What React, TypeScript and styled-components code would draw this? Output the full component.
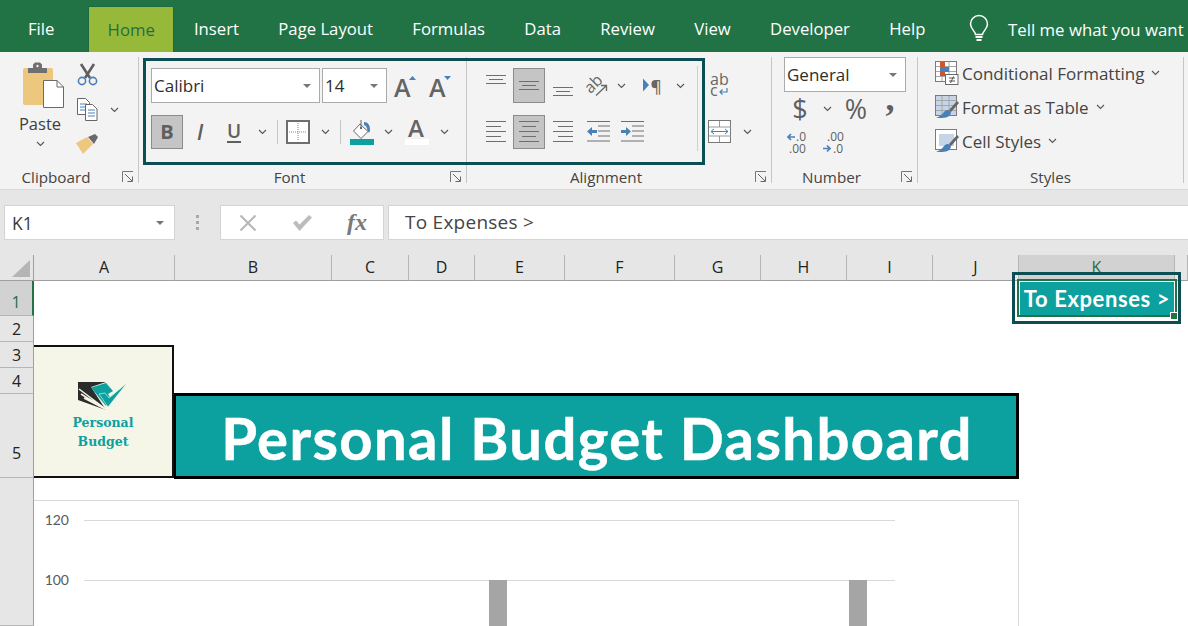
import * as React from "react";
import styled, { createGlobalStyle } from "styled-components";

const GlobalStyle = createGlobalStyle`
  html, body {
    margin: 0;
    padding: 0;
    width: 1188px;
    height: 626px;
    overflow: hidden;
    background: #fff;
    font-family: "Open Sans", "Noto Sans", sans-serif;
  }
  * { box-sizing: border-box; }
  svg { overflow: visible; }
`;

const Page = styled.div`
  width: 1188px;
  height: 626px;
  display: flex;
  flex-direction: column;
  overflow: hidden;
`;

/* tabs */
const TabBar = styled.div`
  height: 52px;
  background: #217346;
  display: flex;
  align-items: flex-end;
  padding-left: 8.3px;
  white-space: nowrap;
  flex: none;
  overflow: hidden;
`;

const Tab = styled.div<{ $active?: boolean }>`
  height: ${(p) => (p.$active ? "46px" : "52px")};
  padding: ${(p) => (p.$active ? "0 18.5px" : "6px 19.7px 0")};
  line-height: 46px;
  font-size: 16.7px;
  color: ${(p) => (p.$active ? "#1f6f45" : "#fff")};
  background: ${(p) => (p.$active ? "#97b93a" : "transparent")};
  border-top: ${(p) => (p.$active ? "1px solid #1d6b3c" : "none")};
  border-left: ${(p) => (p.$active ? "1px solid #1d6b3c" : "none")};
  border-right: ${(p) => (p.$active ? "1px solid #1d6b3c" : "none")};
  &:first-child {
    margin-right: 14px;
  }
`;

const TellMe = styled.div`
  display: flex;
  align-items: center;
  height: 52px;
  padding: 6px 0 0 24px;
  gap: 19px;
  color: #fff;
  font-size: 16.8px;
`;

/* ribbon */
const Ribbon = styled.div`
  position: relative;
  height: 138px;
  flex: none;
  display: flex;
  align-items: flex-start;
  padding-top: 5px;
  background: #f3f3f3;
  border-bottom: 1px solid #d9d9d9;
`;

const Group = styled.div<{ $w: number }>`
  width: ${(p) => p.$w}px;
  height: 130px;
  display: flex;
  flex-direction: column;
  flex: none;
`;

const GroupBody = styled.div<{ $pt?: number; $pl?: number; $gap?: number; $row?: boolean }>`
  flex: 1;
  display: flex;
  flex-direction: ${(p) => (p.$row ? "row" : "column")};
  padding-top: ${(p) => p.$pt ?? 0}px;
  padding-left: ${(p) => p.$pl ?? 0}px;
  gap: ${(p) => p.$gap ?? 0}px;
`;

const GroupFoot = styled.div`
  height: 20px;
  display: flex;
  align-items: center;
`;

const GroupName = styled.div`
  flex: 1;
  text-align: center;
  font-size: 15.2px;
  line-height: 20px;
  color: #444;
`;

const Launcher = styled.div`
  width: 26px;
  flex: none;
  padding-left: 10px;
  display: flex;
  align-items: center;
`;

const GroupSep = styled.div`
  width: 1px;
  height: 126px;
  background: #c6c6c6;
  flex: none;
`;

const Stack = styled.div<{ $w: number; $gap?: number; $pl?: number }>`
  width: ${(p) => p.$w}px;
  flex: none;
  display: flex;
  flex-direction: column;
  gap: ${(p) => p.$gap ?? 0}px;
  padding-left: ${(p) => p.$pl ?? 0}px;
`;

const InnerRule = styled.div`
  width: 1px;
  height: 85px;
  margin-top: -2px;
  background: #cfcfcf;
  flex: none;
`;

const Row = styled.div<{ $h: number }>`
  height: ${(p) => p.$h}px;
  display: flex;
  align-items: center;
  flex: none;
`;

const Slot = styled.div<{ $w: number; $on?: boolean; $h?: number; $nudge?: number }>`
  width: ${(p) => p.$w}px;
  height: ${(p) => p.$h ?? 34}px;
  flex: none;
  display: flex;
  align-items: center;
  justify-content: center;
  color: #5f5f5f;
  background: ${(p) => (p.$on ? "#c5c5c5" : "transparent")};
  border: ${(p) => (p.$on ? "1px solid #8c8c8c" : "none")};
  padding-top: ${(p) => Math.max(p.$nudge ?? 0, 0)}px;
  padding-bottom: ${(p) => Math.max(-(p.$nudge ?? 0), 0)}px;
`;

const VSep = styled.div<{ $l: number; $r: number }>`
  width: 1px;
  height: 24px;
  margin: 0 ${(p) => p.$r}px 0 ${(p) => p.$l}px;
  background: #c6c6c6;
  flex: none;
`;

const Combo = styled.div<{ $w: number }>`
  width: ${(p) => p.$w}px;
  height: 35px;
  flex: none;
  background: #fff;
  border: 1px solid #ababab;
  display: flex;
  align-items: center;
  justify-content: space-between;
  padding: 0 8px 0 2px;
  font-size: 17px;
  color: #2d2d2d;
`;

const ComboCaret = styled.span`
  width: 0;
  height: 0;
  border-left: 4px solid transparent;
  border-right: 4px solid transparent;
  border-top: 4px solid #777;
`;

const Glyph = styled.span<{ $size: number; $weight?: number; $italic?: boolean; $serif?: boolean; $under?: boolean; $lift?: number }>`
  font-size: ${(p) => p.$size}px;
  font-weight: ${(p) => p.$weight ?? 400};
  font-style: ${(p) => (p.$italic ? "italic" : "normal")};
  font-family: ${(p) => (p.$serif ? '"Liberation Serif", serif' : '"Open Sans", sans-serif')};
  line-height: 1;
  color: #5f5f5f;
  border-bottom: ${(p) => (p.$under ? "2px solid #5f5f5f" : "none")};
  margin-bottom: ${(p) => p.$lift ?? 0}px;
`;

const PasteColumn = styled.div`
  width: 76px;
  padding-left: 4px;
  display: flex;
  flex-direction: column;
  align-items: center;
  flex: none;
  padding-top: 5px;
`;

const PasteArt = styled.div`
  margin-left: 7px;
  height: 47px;
`;

const PasteLabel = styled.div`
  font-size: 16.5px;
  line-height: 22px;
  color: #3e3e3e;
  margin-top: 4px;
  margin-bottom: 6px;
`;

const StyleRow = styled.div`
  height: 34px;
  display: flex;
  align-items: center;
  gap: 3px;
  font-size: 17px;
  color: #444;
  white-space: nowrap;
`;

const StyleList = styled.div`
  margin-top: -1px;
`;

const StyleChevron = styled.span`
  margin-left: 4px;
  display: flex;
`;

/* dark frames drawn over the shot */
const RibbonFrame = styled.div`
  position: absolute;
  left: 143px;
  top: 6px;
  width: 562px;
  height: 107px;
  border: 3px solid #0b4f55;
  pointer-events: none;
`;

/* formula bar */
const FormulaArea = styled.div`
  height: 65px;
  flex: none;
  background: #e6e6e6;
  display: flex;
  align-items: flex-start;
  padding: 15px 0 0 4px;
`;

const NameBox = styled.div`
  width: 171px;
  height: 35px;
  flex: none;
  background: #fff;
  border: 1px solid #d4d4d4;
  display: flex;
  align-items: center;
  justify-content: space-between;
  padding: 0 10px 0 7px;
  font-size: 17.5px;
  color: #3a3a3a;
`;

const Grip = styled.div`
  width: 45px;
  height: 35px;
  flex: none;
  display: flex;
  flex-direction: column;
  align-items: center;
  justify-content: center;
  gap: 3px;
  span {
    width: 3px;
    height: 3px;
    background: #a8a8a8;
  }
`;

const FxBox = styled.div`
  width: 164px;
  height: 35px;
  flex: none;
  background: #fff;
  border: 1px solid #d4d4d4;
  display: flex;
  align-items: center;
  justify-content: space-between;
  padding: 0 16px 0 18px;
  margin-right: 4px;
`;

const FxGlyph = styled.span`
  font-family: "Liberation Serif", serif;
  font-style: italic;
  font-weight: 700;
  font-size: 24px;
  color: #7a7a7a;
`;

const FormulaInput = styled.div`
  flex: 1;
  height: 35px;
  background: #fff;
  border: 1px solid #d4d4d4;
  border-right: none;
  padding-left: 16px;
  line-height: 33px;
  font-size: 19px;
  letter-spacing: 0.25px;
  color: #444;
  white-space: nowrap;
`;

/* sheet */
const Sheet = styled.div`
  flex: 1;
  display: grid;
  grid-template-columns: 34px 141px 157px 77px 66px 90px 110px 86px 86px 86px 86px 156px 13px;
  grid-template-rows: 26px 35px 26px 26px 26px 84px 148px;
  background: #fff;
  min-height: 0;
`;

const Corner = styled.div`
  background: #e6e6e6;
  border-right: 1px solid #9f9f9f;
  border-bottom: 1px solid #9f9f9f;
  display: flex;
  align-items: flex-end;
  justify-content: flex-end;
  padding: 0 3px 3px 0;
`;

const ColHead = styled.div<{ $on?: boolean }>`
  background: ${(p) => (p.$on ? "#d2d2d2" : "#e6e6e6")};
  border-right: 1px solid #b5b5b5;
  border-bottom: 1px solid #9f9f9f;
  text-align: center;
  font-size: 16px;
  line-height: 25px;
  color: ${(p) => (p.$on ? "#1f6f45" : "#222")};
`;

const RowHead = styled.div<{ $on?: boolean; $pb?: number; $row: number }>`
  grid-column: 1;
  grid-row: ${(p) => p.$row};
  background: ${(p) => (p.$on ? "#d2d2d2" : "#e6e6e6")};
  border-right: ${(p) => (p.$on ? "2px solid #217346" : "1px solid #9f9f9f")};
  border-bottom: 1px solid #b5b5b5;
  display: flex;
  align-items: ${(p) => (p.$pb !== undefined ? "flex-end" : "center")};
  justify-content: center;
  padding-bottom: ${(p) => p.$pb ?? 0}px;
  font-size: 16px;
  line-height: 20px;
  color: ${(p) => (p.$on ? "#1f6f45" : "#222")};
`;

const LogoCell = styled.div`
  grid-column: 2;
  grid-row: 4 / 7;
  margin: 3px 1px 0 0;
  background: #f5f6e8;
  border-top: 2px solid #111;
  border-right: 2px solid #111;
  border-bottom: 2px solid #111;
  display: flex;
  flex-direction: column;
  align-items: center;
  padding-top: 34px;
`;

const LogoWord = styled.div`
  font-family: "DejaVu Serif", serif;
  font-weight: 700;
  font-size: 12.5px;
  line-height: 19px;
  color: #0ca09f;
  position: relative;
  top: 2px;
`;

const TitleCell = styled.div`
  grid-column: 3 / 12;
  grid-row: 6;
  margin: -1px 0 -1px -1px;
  background: #0ca09f;
  border: 3px solid #000;
  border-left: 2px solid #000;
  display: flex;
  align-items: center;
  justify-content: center;
  color: #fff;
  font-family: "Lato", sans-serif;
  font-weight: 700;
  font-size: 58px;
  letter-spacing: 1.4px;
  -webkit-text-stroke: 0.5px #fff;
  padding: 2px 0 0 2px;
  white-space: nowrap;
`;

const SelectedCell = styled.div`
  grid-column: 12;
  grid-row: 2;
  position: relative;
  background: #0ca09f;
  color: #fff;
  font-family: "Lato", sans-serif;
  font-weight: 700;
  font-size: 22px;
  letter-spacing: 0.6px;
  display: flex;
  align-items: center;
  justify-content: center;
  white-space: nowrap;
  box-shadow: inset 0 0 0 1px #fff;
`;

const SelectionBorder = styled.div`
  position: absolute;
  inset: -2px -2px -1px -2px;
  border: 2px solid #217346;
  pointer-events: none;
`;

const SelectionHandle = styled.div`
  position: absolute;
  right: -3px;
  bottom: -4px;
  width: 8px;
  height: 8px;
  background: #217346;
  border: 1px solid #fff;
`;

const SelectionFrame = styled.div`
  position: absolute;
  inset: -9px -6px -8px -7px;
  border: 3px solid #0b4f55;
  pointer-events: none;
`;

const ChartPanel = styled.div`
  grid-column: 2 / 12;
  grid-row: 7;
  margin-top: 22px;
  border-top: 1px solid #d9d9d9;
  border-right: 1px solid #d9d9d9;
  overflow: hidden;
`;

/* icons */
const blue = "#4a80b8";

const Chevron = () => (
  <svg width="9" height="6" viewBox="0 0 9 6">
    <path d="M1 1l3.5 3.5L8 1" fill="none" stroke="#555" strokeWidth="1.1" />
  </svg>
);

const LauncherIcon = () => (
  <svg width="12" height="12" viewBox="0 0 12 12">
    <path d="M.5 11V.5H11" fill="none" stroke="#777" />
    <path d="M3 3l7 7M10.500 5.500v5h-5" fill="none" stroke="#666" />
  </svg>
);

const PasteIcon = () => (
  <svg width="42" height="47" viewBox="0 0 42 47">
    <rect x="0" y="6" width="30" height="37" rx="2" fill="#eec77f" />
    <path d="M5 6h5V2.500L12 .5h5l2 2V6h5v5H5z" fill="#6f6f6f" />
    <circle cx="14.500" cy="4" r="1.200" fill="#eee" />
    <path d="M20.500 18.500H34l6.500 6.500v20.500h-20z" fill="#fff" stroke="#6a6a6a" />
    <path d="M34 18.500V25h6.500" fill="none" stroke="#6a6a6a" />
  </svg>
);

const ScissorsIcon = () => (
  <svg width="21" height="23" viewBox="0 0 21 23">
    <path d="M4 1l9 14M17 1L8 15" stroke="#5f5f5f" strokeWidth="2.600" fill="none" />
    <circle cx="5" cy="18" r="3.600" fill="none" stroke={blue} strokeWidth="1.600" />
    <circle cx="16" cy="18" r="3.600" fill="none" stroke={blue} strokeWidth="1.600" />
  </svg>
);

const CopyIcon = () => (
  <svg width="21" height="23" viewBox="0 0 21 23">
    <path d="M.5.5h8l4 4v12H.5z" fill="#fff" stroke="#666" />
    <path d="M3 6h7M3 9h7M3 12h7" stroke={blue} />
    <path d="M8.500 6.500h7l4.500 4.500v11.500H8.500z" fill="#fff" stroke="#666" />
    <path d="M11 12h7M11 15h7M11 18h7" stroke={blue} />
  </svg>
);

const BrushIcon = () => (
  <svg width="24" height="21" viewBox="0 0 24 21">
    <path d="M1 9l11-6 6 7-10 10z" fill="#eec77f" />
    <path d="M13 3l7-3 3 3-4 7z" fill="#6a6a6a" />
  </svg>
);

const GrowShrink = ({ down }: { down?: boolean }) => (
  <svg width="24" height="26" viewBox="0 0 24 26">
    <text x="0" y="24" fontFamily="Open Sans, sans-serif" fontWeight="600" fontSize="25" fill="#646464">A</text>
    <path d={down ? "M15 3h7l-3.500 4z" : "M15 7h7l-3.500-4z"} fill={blue} />
  </svg>
);

const BorderIcon = () => (
  <svg width="24" height="24" viewBox="0 0 24 24">
    <rect x="1" y="1" width="22" height="22" fill="#fff" stroke="#6e6e6e" strokeWidth="2" />
    <path d="M12 3v18M3 12h18" stroke="#888" strokeDasharray="1 1" />
  </svg>
);

const FillIcon = () => (
  <svg width="25" height="26" viewBox="0 0 25 26">
    <path d="M11 5l8 7.500-7 7-7.500-7.500z" fill="#fff" stroke="#666" />
    <path d="M12 1v8" stroke="#666" />
    <circle cx="12" cy="9" r="1.200" fill="#666" />
    <path d="M15 3c4 0 6 3 6 8 0 2-1 3-2 2-1-3-1-6-4-7z" fill={blue} />
    <rect x="1" y="20" width="24" height="6" fill="#0ca09f" />
  </svg>
);

const FontColorIcon = () => (
  <svg width="24" height="26" viewBox="0 0 24 26">
    <text x="3" y="18" fontFamily="Open Sans, sans-serif" fontWeight="600" fontSize="24" fill="#646464">A</text>
    <rect x="0" y="20" width="24" height="6" fill="#fff" />
  </svg>
);

type LineSpec = [number, number, number];

const Lines = ({ w, h, lines }: { w: number; h: number; lines: LineSpec[] }) => (
  <svg width={w} height={h} viewBox={`0 0 ${w} ${h}`}>
    {lines.map(([a, b, y], i) => (
      <path key={i} d={`M${a} ${y + 0.5}H${b}`} stroke="#6e6e6e" />
    ))}
  </svg>
);

const OrientIcon = () => (
  <svg width="22" height="22" viewBox="0 0 22 22">
    <text x="-1" y="14" transform="rotate(-45 8 10)" fontFamily="Open Sans, sans-serif" fontSize="16" fill="#666">ab</text>
    <path d="M10 20.500L20 11M15 10.500H20.500V16" fill="none" stroke="#666" strokeWidth="1.300" />
  </svg>
);

const ParagraphIcon = () => (
  <svg width="20" height="17" viewBox="0 0 20 17">
    <path d="M0 1.500l6 6.500-6 6.500z" fill={blue} />
    <text x="7.500" y="14.500" fontFamily="Open Sans, sans-serif" fontWeight="600" fontSize="17" fill="#666">¶</text>
  </svg>
);

const IndentIcon = ({ out }: { out?: boolean }) => (
  <svg width="23" height="21" viewBox="0 0 23 21">
    {[0.5, 5, 10, 15, 20].map((y, i) => (
      <path key={y} d={`M${i === 0 || i === 4 ? 0 : 11} ${y}H23`} stroke="#6e6e6e" />
    ))}
    {out ? (
      <path d="M0 10.500L5 6v3h5v3H5v3z" fill={blue} />
    ) : (
      <path d="M10 10.500L5 6v3H0v3h5v3z" fill={blue} />
    )}
  </svg>
);

const WrapIcon = () => (
  <svg width="20" height="24" viewBox="0 0 20 24">
    <text x="0" y="11" fontFamily="Open Sans, sans-serif" fontSize="16" fill="#666">ab</text>
    <text x="0" y="22" fontFamily="Open Sans, sans-serif" fontSize="16" fill="#666">c</text>
    <path d="M17 14v4h-7M12.500 15.500L10 18l2.500 2.500" fill="none" stroke={blue} strokeWidth="1.200" />
  </svg>
);

const MergeIcon = () => (
  <svg width="24" height="24" viewBox="0 0 24 24">
    <rect x=".5" y=".5" width="22" height="22" fill="#fff" stroke="#777" />
    <path d="M1 7h22M1 16h22M11.500 1v6M11.500 16v6" stroke="#999" />
    <path d="M3 11.500h17M6 9l-3 2.500L6 14M17 9l3 2.500-3 2.500" fill="none" stroke={blue} />
  </svg>
);

const DecimalIcon = ({ more }: { more?: boolean }) => (
  <svg width="24" height="24" viewBox="0 0 24 24">
    {more ? (
      <>
        <text x="5" y="10" fontFamily="Open Sans, sans-serif" fontSize="12" fill="#5f5f5f">.00</text>
        <text x="11" y="22" fontFamily="Open Sans, sans-serif" fontSize="12" fill="#5f5f5f">.0</text>
        <path d="M1 17.500h6M5 14.500l3 3-3 3" fill="none" stroke={blue} strokeWidth="1.700" />
      </>
    ) : (
      <>
        <text x="9" y="10" fontFamily="Open Sans, sans-serif" fontSize="12" fill="#5f5f5f">.0</text>
        <text x="2" y="22" fontFamily="Open Sans, sans-serif" fontSize="12" fill="#5f5f5f">.00</text>
        <path d="M8 6h-6M4 3L1 6l3 3" fill="none" stroke={blue} strokeWidth="1.700" />
      </>
    )}
  </svg>
);

const TableBase = () => (
  <>
    <rect x=".5" y=".5" width="21" height="20" fill="none" stroke="#7b7b7b" />
    <path d="M1 5.500h20M1 10.500h20M1 15.500h20M7 1v19M14 1v19" stroke="#a6a6a6" />
  </>
);

const CondFormatIcon = () => (
  <svg width="24" height="24" viewBox="0 0 24 24">
    <rect x="1" y="1" width="20" height="19" fill="#fff" />
    <TableBase />
    <rect x="5" y="1" width="5" height="5" fill="#d2532a" />
    <rect x="5" y="6" width="9" height="5" fill={blue} />
    <rect x="5" y="11" width="5" height="4" fill="#d2532a" />
    <rect x="10.500" y="13.500" width="12.500" height="10" fill="#fff" stroke="#6a6a6a" />
    <path d="M14 17h6M14 20h6M18.500 15.500l-3 6.500" stroke="#555" fill="none" />
  </svg>
);

const SmallBrush = () => (
  <>
    <path d="M14 15L22 6l2 2-8 9z" fill="#666" />
    <path d="M9 17c3-3 6-2 7 0 0 3-3 6-9 6h-6c3-1 6-3 8-6z" fill={blue} />
  </>
);

const FormatTableIcon = () => (
  <svg width="24" height="24" viewBox="0 0 24 24">
    <rect x="1" y="1" width="20" height="19" fill="#c5d4e6" />
    <TableBase />
    <SmallBrush />
  </svg>
);

const CellStylesIcon = () => (
  <svg width="24" height="24" viewBox="0 0 24 24">
    <rect x=".5" y=".5" width="21" height="20" fill="#fff" stroke="#7b7b7b" />
    <rect x="4" y="5" width="15" height="12" fill="#c5d4e6" />
    <SmallBrush />
  </svg>
);

const BulbIcon = () => (
  <svg width="20" height="26" viewBox="0 0 20 26">
    <path d="M6.500 18.500c0-3-5-5.500-5-10.500a8.500 8.500 0 0 1 17 0c0 5-5 7.500-5 10.500z" fill="none" stroke="#fff" strokeWidth="1.500" />
    <path d="M6.500 21h7M7.500 24h5" stroke="#fff" strokeWidth="1.800" />
  </svg>
);

const CrossIcon = () => (
  <svg width="18" height="18" viewBox="0 0 18 18">
    <path d="M1.500 1.500l15 15M16.500 1.500l-15 15" stroke="#b9b9b9" strokeWidth="2.200" />
  </svg>
);

const CheckIcon = () => (
  <svg width="20" height="16" viewBox="0 0 20 16">
    <path d="M1 8l3-2.500 3.500 4L17 0l3 2.500L7.500 16z" fill="#bcbcbc" />
  </svg>
);

const CornerIcon = () => (
  <svg width="18" height="17" viewBox="0 0 18 17">
    <path d="M18 0v17H0z" fill="#b5b5b5" />
  </svg>
);

const LogoMark = () => (
  <svg width="50" height="30" viewBox="0 0 50 30">
    <path d="M0 1h28L13 6l15 23L0 19z" fill="#2b2b2b" />
    <path d="M29 29L1 8M29 29L3 13M29 29L6 17" stroke="#f5f6e8" strokeWidth="1.500" />
    <path d="M13 6.500L28 2l7 8-5 3 3 5-5 7z" fill="#0ca09f" />
    <path d="M21 13l9 13L49 2 31 17l-4-5z" fill="#0ca09f" stroke="#f5f6e8" strokeWidth=".6" />
  </svg>
);

const ChartSvg = () => (
  <svg width="984" height="126" viewBox="0 0 984 126">
    <path d="M50 19.500h811M50 79.500h811" stroke="#d9d9d9" />
    <text x="35" y="24" textAnchor="end" fontFamily="Lato, sans-serif" fontSize="14" fill="#595959">120</text>
    <text x="35" y="84" textAnchor="end" fontFamily="Lato, sans-serif" fontSize="14" fill="#595959">100</text>
    <rect x="455" y="79" width="18" height="47" fill="#a5a5a5" />
    <rect x="815" y="79" width="18" height="47" fill="#a5a5a5" />
  </svg>
);

const tabs = ["Insert", "Page Layout", "Formulas", "Data", "Review", "View", "Developer", "Help"];
const cols = ["A", "B", "C", "D", "E", "F", "G", "H", "I", "J"];

const topLines: LineSpec[] = [[0, 20, 0], [3, 17, 4], [0, 20, 8]];
const leftLines: LineSpec[] = [[0, 20, 0], [0, 15, 5], [0, 20, 10], [0, 15, 15], [0, 20, 20]];
const centerLines: LineSpec[] = [[0, 20, 0], [3, 17, 5], [0, 20, 10], [3, 17, 15], [0, 20, 20]];
const rightLines: LineSpec[] = [[0, 20, 0], [5, 20, 5], [0, 20, 10], [5, 20, 15], [0, 20, 20]];

export default function App() {
  return (
    <Page>
      <GlobalStyle />
      <TabBar>
        <Tab>File</Tab>
        <Tab $active>Home</Tab>
        {tabs.map((t) => (
          <Tab key={t}>{t}</Tab>
        ))}
        <TellMe>
          <BulbIcon />
          <span>Tell me what you want</span>
        </TellMe>
      </TabBar>

      <Ribbon>
        <Group $w={138}>
          <GroupBody $row>
            <PasteColumn>
              <PasteArt><PasteIcon /></PasteArt>
              <PasteLabel>Paste</PasteLabel>
              <Chevron />
            </PasteColumn>
            <div>
              <Row $h={35}>
                <Slot $w={22}><ScissorsIcon /></Slot>
              </Row>
              <Row $h={35}>
                <Slot $w={22}><CopyIcon /></Slot>
                <Slot $w={32}><Chevron /></Slot>
              </Row>
              <Row $h={35}>
                <Slot $w={22}><BrushIcon /></Slot>
              </Row>
            </div>
          </GroupBody>
          <GroupFoot>
            <GroupName>Clipboard</GroupName>
            <Launcher><LauncherIcon /></Launcher>
          </GroupFoot>
        </Group>
        <GroupSep />

        <Group $w={327}>
          <GroupBody $pt={11} $pl={12} $gap={12}>
            <Row $h={35}>
              <Combo $w={169}>Calibri<ComboCaret /></Combo>
              <Slot $w={2} />
              <Combo $w={65}>14<ComboCaret /></Combo>
              <Slot $w={37}><GrowShrink /></Slot>
              <Slot $w={34}><GrowShrink down /></Slot>
            </Row>
            <Row $h={34}>
              <Slot $w={32} $on><Glyph $size={20} $weight={700}>B</Glyph></Slot>
              <Slot $w={34}><Glyph $size={21} $weight={600} $italic>I</Glyph></Slot>
              <Slot $w={34}><Glyph $size={19} $weight={600} $under>U</Glyph></Slot>
              <Slot $w={22}><Chevron /></Slot>
              <VSep $l={4} $r={8} />
              <Slot $w={24}><BorderIcon /></Slot>
              <Slot $w={30}><Chevron /></Slot>
              <VSep $l={0} $r={8} />
              <Slot $w={25}><FillIcon /></Slot>
              <Slot $w={28}><Chevron /></Slot>
              <Slot $w={3} />
              <Slot $w={24}><FontColorIcon /></Slot>
              <Slot $w={30}><Chevron /></Slot>
            </Row>
          </GroupBody>
          <GroupFoot>
            <GroupName>Font</GroupName>
            <Launcher><LauncherIcon /></Launcher>
          </GroupFoot>
        </Group>
        <GroupSep />

        <Group $w={304}>
          <GroupBody $row $pt={11} $pl={12}>
            <Stack $w={218} $gap={12}>
              <Row $h={35}>
                <Slot $w={34} $h={35} $nudge={-12}><Lines w={20} h={9} lines={topLines} /></Slot>
                <Slot $w={32} $h={35} $on><Lines w={20} h={9} lines={topLines} /></Slot>
                <Slot $w={36} $h={35} $nudge={12}><Lines w={20} h={9} lines={topLines} /></Slot>
                <Slot $w={31}><OrientIcon /></Slot>
                <Slot $w={18}><Chevron /></Slot>
                <Slot $w={46}><ParagraphIcon /></Slot>
                <Slot $w={9}><Chevron /></Slot>
              </Row>
              <Row $h={34}>
                <Slot $w={34} $nudge={-2}><Lines w={20} h={21} lines={leftLines} /></Slot>
                <Slot $w={32} $on $nudge={-2}><Lines w={20} h={21} lines={centerLines} /></Slot>
                <Slot $w={36} $nudge={-2}><Lines w={20} h={21} lines={rightLines} /></Slot>
                <Slot $w={34} $nudge={-2}><IndentIcon out /></Slot>
                <Slot $w={34} $nudge={-2}><IndentIcon /></Slot>
              </Row>
            </Stack>
            <InnerRule />
            <Stack $w={73} $gap={12} $pl={10}>
              <Row $h={35}>
                <Slot $w={24}><WrapIcon /></Slot>
              </Row>
              <Row $h={34}>
                <Slot $w={24}><MergeIcon /></Slot>
                <Slot $w={30}><Chevron /></Slot>
              </Row>
            </Stack>
          </GroupBody>
          <GroupFoot>
            <GroupName>Alignment</GroupName>
            <Launcher><LauncherIcon /></Launcher>
          </GroupFoot>
        </Group>
        <GroupSep />

        <Group $w={145}>
          <GroupBody $pl={12}>
            <Row $h={35}>
              <Combo $w={122}>General<ComboCaret /></Combo>
            </Row>
            <Row $h={33}>
              <Slot $w={32}><Glyph $size={27}>$</Glyph></Slot>
              <Slot $w={22}><Chevron /></Slot>
              <Slot $w={36}><Glyph $size={27}>%</Glyph></Slot>
              <Slot $w={32}><Glyph $size={36} $weight={700} $serif $lift={22}>,</Glyph></Slot>
            </Row>
            <Row $h={36}>
              <Slot $w={30}><DecimalIcon /></Slot>
              <Slot $w={40}><DecimalIcon more /></Slot>
            </Row>
          </GroupBody>
          <GroupFoot>
            <GroupName>Number</GroupName>
            <Launcher><LauncherIcon /></Launcher>
          </GroupFoot>
        </Group>
        <GroupSep />

        <Group $w={265}>
          <GroupBody $pl={17}>
            <StyleList>
              <StyleRow>
                <CondFormatIcon />
                Conditional Formatting
                <StyleChevron><Chevron /></StyleChevron>
              </StyleRow>
              <StyleRow>
                <FormatTableIcon />
                Format as Table
                <StyleChevron><Chevron /></StyleChevron>
              </StyleRow>
              <StyleRow>
                <CellStylesIcon />
                Cell Styles
                <StyleChevron><Chevron /></StyleChevron>
              </StyleRow>
            </StyleList>
          </GroupBody>
          <GroupFoot>
            <GroupName>Styles</GroupName>
          </GroupFoot>
        </Group>
        <GroupSep />
        <RibbonFrame />
      </Ribbon>

      <FormulaArea>
        <NameBox>K1<ComboCaret /></NameBox>
        <Grip><span /><span /><span /></Grip>
        <FxBox>
          <CrossIcon />
          <CheckIcon />
          <FxGlyph>fx</FxGlyph>
        </FxBox>
        <FormulaInput>To Expenses &gt;</FormulaInput>
      </FormulaArea>

      <Sheet>
        <Corner><CornerIcon /></Corner>
        {cols.map((c) => (
          <ColHead key={c}>{c}</ColHead>
        ))}
        <ColHead $on>K</ColHead>
        <ColHead />

        <RowHead $row={2} $on $pb={3}>1</RowHead>
        <RowHead $row={3}>2</RowHead>
        <RowHead $row={4}>3</RowHead>
        <RowHead $row={5}>4</RowHead>
        <RowHead $row={6} $pb={14}>5</RowHead>
        <RowHead $row={7} />

        <SelectedCell>
          To Expenses &gt;
          <SelectionBorder />
          <SelectionHandle />
          <SelectionFrame />
        </SelectedCell>

        <LogoCell>
          <LogoMark />
          <LogoWord>Personal</LogoWord>
          <LogoWord>Budget</LogoWord>
        </LogoCell>

        <TitleCell>Personal Budget Dashboard</TitleCell>

        <ChartPanel>
          <ChartSvg />
        </ChartPanel>
      </Sheet>
    </Page>
  );
}
